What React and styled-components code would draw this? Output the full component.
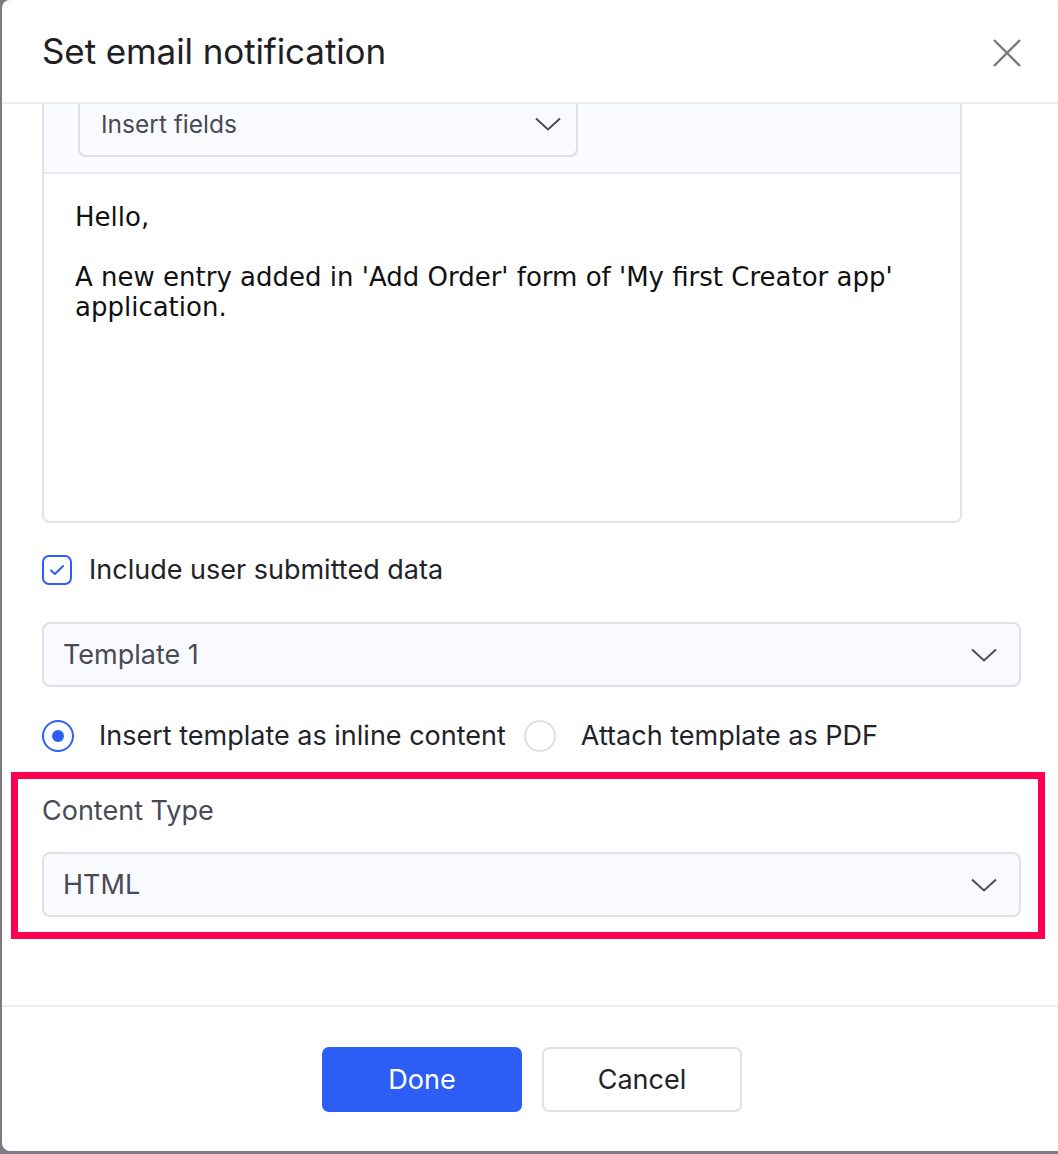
import React, { useLayoutEffect, useRef } from 'react';
import styled, { createGlobalStyle } from 'styled-components';

const GlobalStyle = createGlobalStyle`
  html, body {
    margin: 0;
    padding: 0;
    background: #7b7a85;
    font-family: Inter, "Noto Sans", sans-serif;
  }
  * { box-sizing: border-box; }
`;

const Page = styled.div`
  width: 1058px;
  height: 1154px;
  overflow: hidden;
  padding-left: 2px;
`;

const Modal = styled.div`
  width: 1062px;
  height: 1151px;
  background: #fff;
  border-radius: 8px;
  display: flex;
  flex-direction: column;
  overflow: hidden;
`;

const Header = styled.div`
  height: 104px;
  flex: none;
  display: flex;
  align-items: center;
  justify-content: space-between;
  padding: 0 42px 0 40px;
  border-bottom: 2px solid #ececf2;
`;

const Title = styled.h2`
  margin: 0;
  font-size: 35px;
  font-weight: 400;
  color: #1f2024;
  letter-spacing: -0.1px;
`;

const CloseButton = styled.button`
  border: 0;
  background: none;
  padding: 0;
  margin-top: 4px;
  width: 30px;
  height: 30px;
  display: flex;
  align-items: center;
  justify-content: center;
  cursor: pointer;
`;

const Body = styled.div`
  flex: 1;
  overflow: auto;
  scrollbar-width: none;
  padding: 24px 41px 68px 40px;
  display: flex;
  flex-direction: column;
  &::-webkit-scrollbar { display: none; }
`;

const Editor = styled.div`
  width: 920px;
  flex: none;
  border: 2px solid #e2e2ec;
  border-radius: 8px;
  overflow: hidden;
`;

const Toolbar = styled.div`
  background: #fafbfe;
  border-bottom: 2px solid #e8e6ee;
  padding: 15px 34px 15px;
`;

const EditorText = styled.div`
  height: 347px;
  padding: 28px 31px;
  font-family: "DejaVu Sans", sans-serif;
  font-size: 26px;
  line-height: 30px;
  color: #111;
  p { margin: 0; }
  p + p { margin-top: 30px; }
`;

const Select = styled.div`
  width: ${p => p.$width || '979px'};
  height: ${p => p.$height || '65px'};
  flex: none;
  display: flex;
  align-items: center;
  justify-content: space-between;
  padding: 0 ${p => p.$padRight || '22px'} 0 ${p => p.$padLeft || '19px'};
  background: #f9fafd;
  border: 2px solid #e0e0ea;
  border-radius: 8px;
  font-size: ${p => p.$size || '27px'};
  color: #484a55;
`;

const Row = styled.label`
  display: flex;
  align-items: center;
  margin-top: ${p => p.$top || '0'};
  font-size: 27px;
  line-height: 32px;
  color: #22232a;
`;

const CheckBox = styled.span`
  width: 30px;
  height: 30px;
  border: 2px solid #2d5ff6;
  border-radius: 7px;
  display: flex;
  align-items: center;
  justify-content: center;
  margin-right: 17px;
`;

const Radio = styled.span`
  width: 32px;
  height: 32px;
  border-radius: 50%;
  border: 2px solid ${p => (p.$checked ? '#2d5ff6' : '#e0e0ea')};
  display: flex;
  align-items: center;
  justify-content: center;
  margin-right: 25px;
  flex: none;
  &::after {
    content: '';
    display: ${p => (p.$checked ? 'block' : 'none')};
    width: 12px;
    height: 12px;
    border-radius: 50%;
    background: #2d5ff6;
  }
`;

const RadioLabel = styled.span`
  margin-right: 18px;
`;

const Highlight = styled.div`
  margin: 20px -22px 0 -31px;
  border: 7px solid #ff0050;
  padding: 16px 15px 15px 24px;
`;

const FieldLabel = styled.div`
  font-size: 27px;
  line-height: 32px;
  color: #484a55;
  margin: 0 0 25px 0;
`;

const Footer = styled.div`
  flex: none;
  height: 146px;
  border-top: 2px solid #ececf2;
  display: flex;
  justify-content: center;
  align-items: flex-start;
  padding: 40px 2px 0 0;
  gap: 20px;
`;

const Button = styled.button`
  width: 200px;
  height: 65px;
  border-radius: 7px;
  font-family: inherit;
  font-size: 27px;
  cursor: pointer;
  background: ${p => (p.$primary ? '#2c5ef6' : '#fff')};
  color: ${p => (p.$primary ? '#fff' : '#222329')};
  border: 2px solid ${p => (p.$primary ? '#2c5ef6' : '#e0e0ea')};
`;

const Chevron = () => (
  <svg width="26" height="14" viewBox="0 0 26 14" fill="none">
    <path d="M1 1.5 L13 12.5 L25 1.5" stroke="#4a4c57" strokeWidth="2" />
  </svg>
);

const CloseIcon = () => (
  <svg width="28" height="28" viewBox="0 0 28 28" fill="none">
    <path d="M1 1 L27 27 M27 1 L1 27" stroke="#7a7b82" strokeWidth="2.4" />
  </svg>
);

const Check = () => (
  <svg width="16" height="12" viewBox="0 0 16 12" fill="none">
    <path d="M2 6.5 L6 10 L14 2" stroke="#2d5ff6" strokeWidth="2" strokeLinecap="round" strokeLinejoin="round" />
  </svg>
);

export default function App() {
  const bodyRef = useRef(null);

  useLayoutEffect(() => {
    if (bodyRef.current) bodyRef.current.scrollTop = 54;
  }, []);

  return (
    <>
      <GlobalStyle />
      <Page>
        <Modal>
          <Header>
            <Title>Set email notification</Title>
            <CloseButton aria-label="Close"><CloseIcon /></CloseButton>
          </Header>

          <Body ref={bodyRef}>
            <Editor>
              <Toolbar>
                <Select $width="500px" $height="66px" $size="24.5px" $padLeft="21px" $padRight="15px">
                  Insert fields
                  <Chevron />
                </Select>
              </Toolbar>
              <EditorText>
                <p>Hello,</p>
                <p>A new entry added in 'Add Order' form of 'My first Creator app' application.</p>
              </EditorText>
            </Editor>

            <Row $top="31px">
              <CheckBox><Check /></CheckBox>
              Include user submitted data
            </Row>

            <Select style={{ marginTop: 36 }}>
              Template 1
              <Chevron />
            </Select>

            <Row $top="33px">
              <Radio $checked />
              <RadioLabel>Insert template as inline content</RadioLabel>
              <Radio />
              <span>Attach template as PDF</span>
            </Row>

            <Highlight>
              <FieldLabel>Content Type</FieldLabel>
              <Select>
                HTML
                <Chevron />
              </Select>
            </Highlight>
          </Body>

          <Footer>
            <Button $primary>Done</Button>
            <Button>Cancel</Button>
          </Footer>
        </Modal>
      </Page>
    </>
  );
}
